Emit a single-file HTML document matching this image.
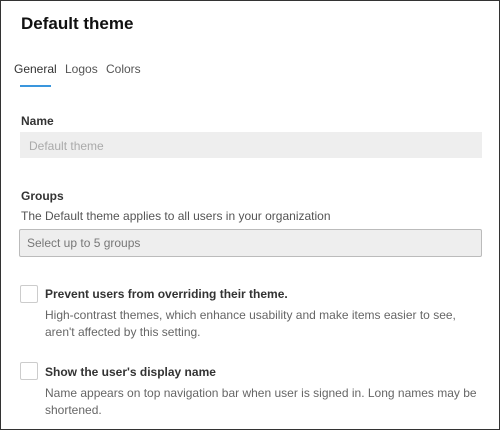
<!DOCTYPE html>
<html><head><style>
body{margin:0;width:500px;height:430px;overflow:hidden;background:#fff;font-family:"Liberation Sans",sans-serif;}
.frame{position:absolute;left:0;top:0;width:498px;height:428px;border:1px solid #333;}
.a{position:absolute;white-space:nowrap;}
.t{font-size:12px;color:#333;}
.g{font-size:12px;color:#666;}
.b{font-weight:bold;color:#333;font-size:12px;}
.box{position:absolute;left:20px;width:462px;height:26px;background:#eeeeee;}
.cb{position:absolute;left:20px;width:16px;height:16px;border:1px solid #ccc;border-radius:2px;background:#fff;}
</style></head><body>
<div class="frame"></div>
<div class="a" style="left:21px;top:14px;font-size:17px;font-weight:bold;color:#111;">Default theme</div>
<div class="a t" style="left:14px;top:62px;color:#333">General</div>
<div class="a t" style="left:65px;top:62px;color:#555">Logos</div>
<div class="a t" style="left:106px;top:62px;color:#555">Colors</div>
<div style="position:absolute;left:20px;top:85px;width:31px;height:2px;background:#3a96dd"></div>
<div class="a b" style="left:21px;top:114px">Name</div>
<div class="box" style="top:132px"></div>
<div class="a g" style="left:29px;top:139px;color:#aaa">Default theme</div>
<div class="a b" style="left:21px;top:189px">Groups</div>
<div class="a g" style="left:21px;top:209px;color:#555">The Default theme applies to all users in your organization</div>
<div class="box" style="top:229px;height:26px;border:1px solid #bbb;width:461px;left:19px;border-radius:2px"></div>
<div class="a g" style="left:27px;top:236px;color:#777">Select up to 5 groups</div>
<div class="cb" style="top:285px"></div>
<div class="a b" style="left:45px;top:287px">Prevent users from overriding their theme.</div>
<div class="a g" style="left:45px;top:307px;line-height:17px">High-contrast themes, which enhance usability and make items easier to see,<br>aren't affected by this setting.</div>
<div class="cb" style="top:362px"></div>
<div class="a b" style="left:45px;top:365px">Show the user's display name</div>
<div class="a g" style="left:45px;top:385px;line-height:17px">Name appears on top navigation bar when user is signed in. Long names may be<br>shortened.</div>
</body></html>
